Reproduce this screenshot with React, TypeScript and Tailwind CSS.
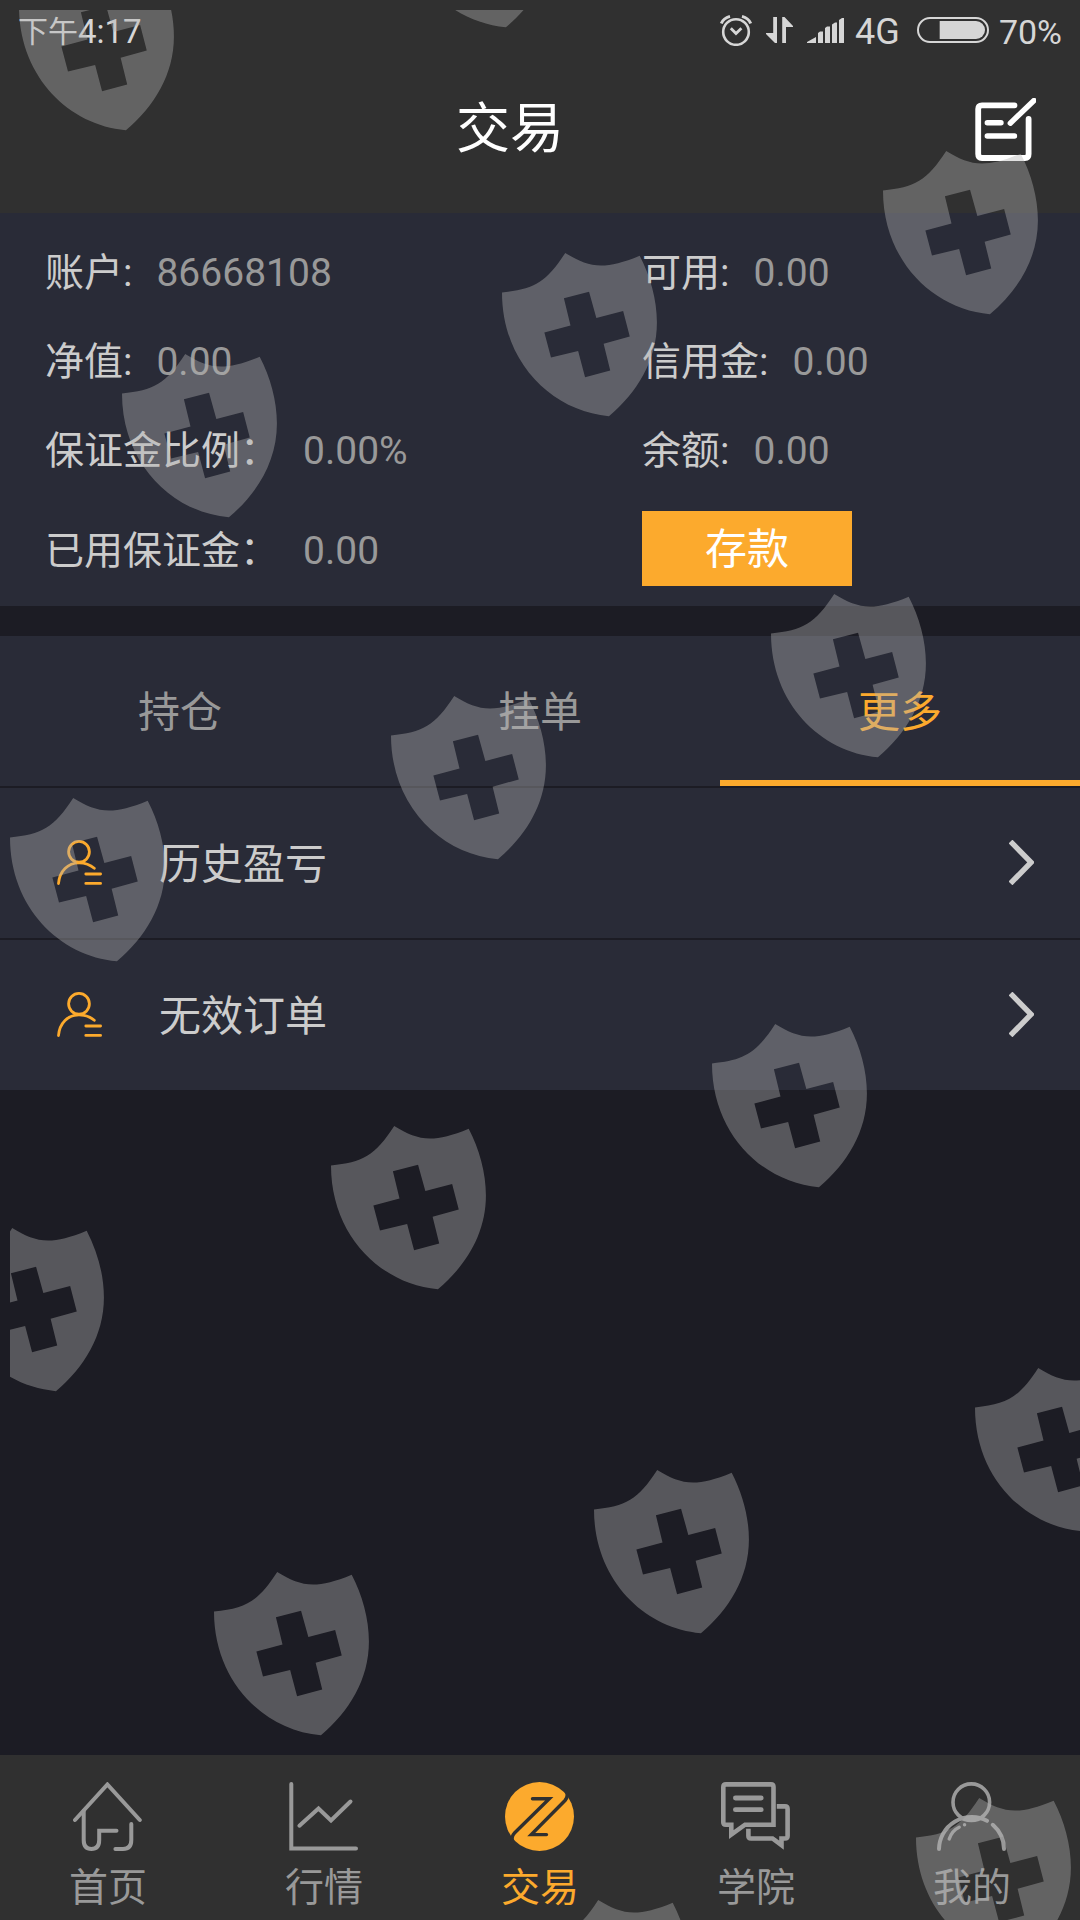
import { useState } from "react"
import type { ReactNode } from "react"

interface AccountField {
  label: string
  value: string
}

const accountRows: AccountField[][] = [
  [
    { label: "账户:", value: "86668108" },
    { label: "可用:", value: "0.00" },
  ],
  [
    { label: "净值:", value: "0.00" },
    { label: "信用金:", value: "0.00" },
  ],
  [
    { label: "保证金比例：", value: "0.00%" },
    { label: "余额:", value: "0.00" },
  ],
]

const tabs = ["持仓", "挂单", "更多"]
const records = ["历史盈亏", "无效订单"]

// top left corner of every shield
const shields = [
  [19, -33],
  [399, -136],
  [883, 151],
  [502, 253],
  [122, 354],
  [771, 594],
  [391, 696],
  [10, 798],
  [712, 1024],
  [331, 1126],
  [-51, 1228],
  [975, 1368],
  [594, 1470],
  [214, 1572],
  [916, 1798],
  [535, 1900],
]

const ShieldOverlay = () => (
  <svg
    className="pointer-events-none absolute inset-0 h-full w-full pl-[10px] pt-[10px]"
    viewBox="10 10 1070 1910"
    preserveAspectRatio="xMinYMin slice"
    fill="#b2b2b2"
    fillOpacity="0.4"
    fillRule="evenodd"
    aria-hidden="true"
  >
    {shields.map(([x, y]) => (
      <path
        key={`${x},${y}`}
        transform={`translate(${x} ${y}) scale(0.331)`}
        d="M0 119C95 110 133 90 191 0C262 43 305 54 416 8C448 70 468 140 468 210C468 325 408 422 323 493C150 478 0 330 0 119ZM187 137L263 117L285 196L366 175L386 252L307 274L327 355L251 375L230 296L148 316L128 240L207 219Z"
      />
    ))}
  </svg>
)

const StatusBar = () => (
  <div className="flex h-[60px] items-center justify-between px-[18px] text-[34px] leading-[36px] text-[#d6d6d6]">
    <div className="flex items-center pt-[3px]">
      <span className="text-[30px]">下午</span>
      <span className="text-[33px]">4:17</span>
    </div>
    <div className="flex items-center gap-[14px]">
      <svg className="h-[31px] w-[32px]" viewBox="0 0 32 31" fill="none" stroke="currentColor" strokeWidth="2.6">
        <circle cx="16" cy="17" r="12.8" />
        <path d="M10.8 13.3L16 18.6L21.4 13.3" strokeWidth="2.8" />
        <path d="M1.3 8.5Q3.5 3.2 10 1.4M30.7 8.5Q28.5 3.2 22 1.4" strokeWidth="3" />
      </svg>
      <svg className="h-[26px] w-[27px]" viewBox="0 0 27 26" fill="currentColor">
        <path d="M7.2 0H11V26H9L0 17V16H7.2ZM16.2 0H18.5L27 9V10H20V26H16.2Z" />
      </svg>
      <svg className="h-[25px] w-[37px]" viewBox="0 0 37 25" fill="currentColor">
        <path d="M0 25V24L9 19V25ZM11 25V15L13 13.5H16V25ZM18 25V10L20 8.5H23V25ZM25 25V6.5L28 4.5H30V25ZM32 25V2L35 0H37V25Z" />
      </svg>
      <span className="-ml-[3px] pt-[3px] text-[36px]">4G</span>
      <div className="flex items-center gap-[10px] pl-[3px]">
        <svg className="h-[26px] w-[72px]" viewBox="0 0 72 26" fill="none">
          <rect x="1" y="1" width="70" height="24" rx="12" stroke="currentColor" strokeWidth="2" />
          <path d="M22.7 4H59A9 9 0 0 1 59 22H22.7Z" fill="currentColor" />
        </svg>
        <span className="pt-[3px]">70%</span>
      </div>
    </div>
  </div>
)

const Field = ({ label, value }: AccountField) => (
  <div className="flex items-center gap-[24px]">
    <dt className="text-[#cccccc]">{label}</dt>
    <dd className="text-[#999999]">{value}</dd>
  </div>
)

const RecordIcon = () => (
  <svg className="h-[45px] w-[45px] text-[#fcaa2d]" viewBox="0 0 45 45" fill="none" stroke="currentColor" strokeWidth="2.8" strokeLinecap="round">
    <circle cx="22" cy="11.8" r="10.4" />
    <path d="M1.5 43.5C2.5 31 11 22.8 22 22.8C28 22.8 33 24.5 37.3 28.3" />
    <path d="M28.8 34H43.6M28.8 43.4H43.6" />
  </svg>
)

const Chevron = () => (
  <svg className="h-[45px] w-[25px] text-[#cccccc]" viewBox="0 0 25 45" fill="none" stroke="currentColor" strokeWidth="5.4">
    <path d="M1.5 1.5L22 22.4L1.5 43.4" />
  </svg>
)

interface NavItem {
  label: string
  icon: ReactNode
}

const navItems: NavItem[] = [
  {
    label: "首页",
    icon: (
      <>
        <path d="M2 38L34.4 2.5L66.8 38" />
        <path d="M10.7 28.7V58Q10.7 67 18.4 67Q26.2 67 26.2 58V48.7H43.5" />
        <path d="M58.3 42V58Q58.3 67 50 67H42.4" />
      </>
    ),
  },
  {
    label: "行情",
    icon: (
      <>
        <path d="M2.3 2V66.5H67" />
        <path d="M10.4 43.7L29.5 26.5L42 38.5L61.5 19.5" />
      </>
    ),
  },
  {
    label: "交易",
    icon: (
      <>
        <circle cx="34.5" cy="34.5" r="34.5" fill="currentColor" stroke="none" />
        <g stroke="#303030" strokeWidth="3.4">
          <path d="M27.5 16.8H44.3L9.5 51Q5.5 55 8 61" />
          <path d="M41.5 52.6H26.3L60 18.5Q64 14 61 8" />
        </g>
      </>
    ),
  },
  {
    label: "学院",
    icon: (
      <>
        <g strokeLinecap="butt" strokeLinejoin="miter" strokeWidth="4.6">
          <path d="M5 2.4H50Q52.5 2.4 52.5 5V42.7H24L10.3 52.5V42.7H4.8Q2.3 42.7 2.3 40.2V5Q2.3 2.4 5 2.4Z" />
          <path d="M55.8 24.4H64Q66.6 24.4 66.6 27V54Q66.6 56.5 64 56.5H60.5V63.2L51.5 56.5H30Q27.4 56.5 27.4 54V46.7" />
        </g>
        <path d="M14.4 16H40.2M14.4 27.7H40.2" strokeWidth="4.8" />
      </>
    ),
  },
  {
    label: "我的",
    icon: (
      <>
        <circle cx="34.3" cy="20.2" r="18.3" strokeWidth="3.6" />
        <path d="M2 67A32.6 32.6 0 0 1 50 38.8M55.8 42.8A32.6 32.6 0 0 1 67 67" />
        <path d="M12.2 57Q15 48.5 22.2 45.2M27.5 42.7H27.6" strokeWidth="3.4" />
      </>
    ),
  },
]

const App = () => {
  const [activeTab, setActiveTab] = useState("更多")

  return (
    <div className="relative flex min-h-screen flex-col overflow-hidden bg-[#1c1c24] font-['Roboto','Noto_Sans_CJK_SC',sans-serif]">
      {/* HEADER */}
      <header className="bg-[#303030] pb-[15px]">
        <StatusBar />
        <div className="flex h-[138px] items-center pl-[45px] pr-[44px]">
          <h1 className="flex-1 pt-[2px] text-center text-[54px] leading-[60px] text-white">
            交易
          </h1>
          <button type="button" aria-label="编辑" className="text-white">
            <svg className="h-[63px] w-[61px]" viewBox="0 0 61 63" fill="none" stroke="currentColor" strokeWidth="5.8" strokeLinecap="round">
              <path d="M39.5 7.3H7Q3.2 7.3 3.2 11V56Q3.2 60 7 60H50Q53.6 60 53.6 56V21" />
              <path d="M12.3 24.7H26M12.3 38H39.5" strokeWidth="5.4" />
              <path d="M35.3 25.2L59 2.5" strokeWidth="5.4" />
            </svg>
          </button>
        </div>
      </header>

      <main className="flex-1">
        {/* ACCOUNT */}
        <section className="bg-[#292b37] pl-[45px] pt-[15px] text-[39px] leading-[48px]">
          <dl>
            {accountRows.map((row) => (
              <div key={row[0].label} className="grid h-[89px] grid-cols-[15fr_11fr] items-center">
                {row.map((field) => (
                  <Field key={field.label} {...field} />
                ))}
              </div>
            ))}
            <div className="grid h-[111px] grid-cols-[15fr_11fr] items-center">
              <Field label="已用保证金：" value="0.00" />
              <button type="button" className="mt-4 h-[75px] w-[210px] self-start bg-[#fcaa2d] pt-[2px] text-[42px] text-white">
                存款
              </button>
            </div>
          </dl>
        </section>

        {/* TABS */}
        <div role="tablist" className="mt-[30px] grid grid-cols-3 bg-[#292b37]">
          {tabs.map((tab) => (
            <button
              key={tab}
              type="button"
              role="tab"
              aria-selected={tab === activeTab}
              onClick={() => setActiveTab(tab)}
              className={`h-[150px] border-b-6 pt-2 text-[42px] ${
                tab === activeTab
                  ? "border-b-[#fcaa2d] text-[#fcaa2d]"
                  : "border-b-transparent text-[#999999]"
              }`}
            >
              {tab}
            </button>
          ))}
        </div>

        {/* RECORDS */}
        <ul>
          {records.map((record) => (
            <li key={record} className="mt-[2px] bg-[#292b37]">
              <a href="#" className="flex h-[150px] items-center pb-[1px] pl-[57px] pr-[46px]">
                <RecordIcon />
                <span className="ml-[57px] flex-1 pt-[3px] text-[42px] text-[#cccccc]">{record}</span>
                <Chevron />
              </a>
            </li>
          ))}
        </ul>
      </main>

      {/* BOTTOM NAV */}
      <nav className="grid h-[165px] grid-cols-5 bg-[#303030]">
        {navItems.map((item) => (
          <a
            key={item.label}
            href="#"
            className={`flex flex-col items-center gap-[13px] pt-[27px] ${
              item.label === "交易" ? "text-[#fcaa2d]" : "text-[#999999]"
            }`}
          >
            <svg
              className="h-[69px] w-[70px]"
              viewBox="0 0 70 69"
              fill="none"
              stroke="currentColor"
              strokeWidth="4"
              strokeLinecap="round"
            >
              {item.icon}
            </svg>
            <span className="text-[39px] leading-[48px]">{item.label}</span>
          </a>
        ))}
      </nav>

      <ShieldOverlay />
    </div>
  )
}

export default App
